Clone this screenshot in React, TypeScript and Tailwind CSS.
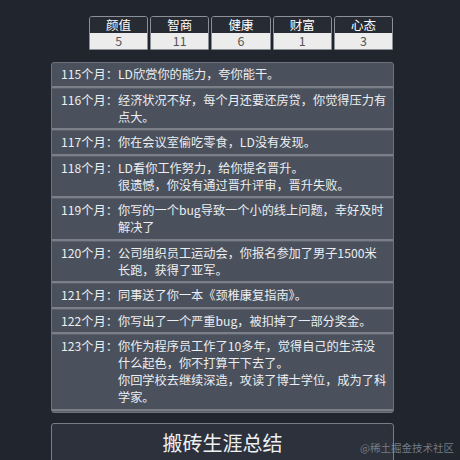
import React from "react";

const stats = [
  { name: "颜值", value: 5 },
  { name: "智商", value: 11 },
  { name: "健康", value: 6 },
  { name: "财富", value: 1 },
  { name: "心态", value: 3 },
];

const events: { month: number; lines: string[] }[] = [
  { month: 115, lines: ["LD欣赏你的能力，夸你能干。"] },
  { month: 116, lines: ["经济状况不好，每个月还要还房贷，你觉得压力有", "点大。"] },
  { month: 117, lines: ["你在会议室偷吃零食，LD没有发现。"] },
  { month: 118, lines: ["LD看你工作努力，给你提名晋升。", "很遗憾，你没有通过晋升评审，晋升失败。"] },
  { month: 119, lines: ["你写的一个bug导致一个小的线上问题，幸好及时", "解决了"] },
  { month: 120, lines: ["公司组织员工运动会，你报名参加了男子1500米", "长跑，获得了亚军。"] },
  { month: 121, lines: ["同事送了你一本《颈椎康复指南》。"] },
  { month: 122, lines: ["你写出了一个严重bug，被扣掉了一部分奖金。"] },
  {
    month: 123,
    lines: [
      "你作为程序员工作了10多年，觉得自己的生活没",
      "什么起色，你不打算干下去了。",
      "你回学校去继续深造，攻读了博士学位，成为了科",
      "学家。",
    ],
  },
];

export default function App() {
  return (
    <div
      className="relative h-[460px] w-[460px] overflow-hidden bg-[#20252e] pt-[16px]"
      style={{ fontFamily: '"Noto Sans CJK SC", "Noto Sans", sans-serif' }}
    >
      <div className="ml-[51px] w-[343px]">
        <div className="flex gap-[2px] pl-[38px] pr-[1px]">
          {stats.map((s) => (
            <div
              key={s.name}
              className="flex-1 overflow-hidden rounded-t-[3px] border border-[#8b9098] text-center text-[12.5px]"
            >
              <div className="h-[16px] bg-[#262b34] leading-[16px] text-white">{s.name}</div>
              <div className="h-[16px] bg-[#ececec] leading-[16px] text-[#555]">{s.value}</div>
            </div>
          ))}
        </div>

        <div className="mt-[12px] overflow-hidden rounded-[3px] border border-[#6c727c] bg-[#4a515d]">
          {events.map((e) => (
            <div key={e.month}>
              <div className="flex pt-[3px] pb-[2.5px] pl-[9px] text-[12.2px] leading-[17px] text-[#eceef1]">
                <div className="w-[57px] shrink-0 whitespace-nowrap">{e.month}个月：</div>
                <div className="flex-1">
                  {e.lines.map((l, i) => (
                    <div key={i} className="whitespace-nowrap">
                      {l}
                    </div>
                  ))}
                </div>
              </div>
              <div className="h-[3px] border-t-2 border-[#7a7f88] bg-[#5b616c]" />
            </div>
          ))}
        </div>

        <button className="mt-[10px] flex h-[46px] w-full items-start justify-center rounded-[3px] border border-[#787d86] bg-[#2c313b] pt-[5px] text-[20px] leading-[28px] text-[#eef0f2]">
          搬砖生涯总结
        </button>
      </div>

      <div className="absolute right-[6px] top-[440px] text-[10.5px] text-[#8a8f96] opacity-80">
        @稀土掘金技术社区
      </div>
    </div>
  );
}
